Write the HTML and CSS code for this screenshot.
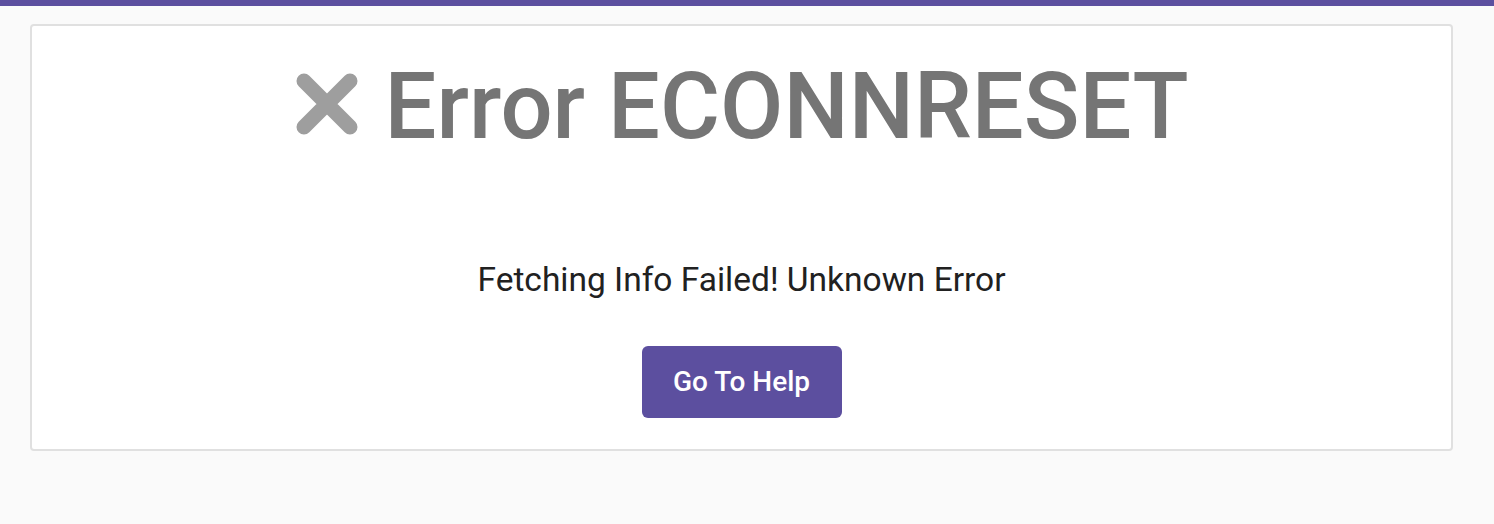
FILE: index.html
```html
<!DOCTYPE html>
<html>
<head>
<meta charset="utf-8">
<link rel="stylesheet" href="styles.css">
</head>
<body>
<div class="topbar"></div>
<main class="page">
  <section class="card">
    <h1 class="title">
      <svg class="x-icon" viewBox="0 0 64 64" width="64" height="64" aria-hidden="true">
        <path d="M9 9 L55 55 M55 9 L9 55" stroke="#9e9e9e" stroke-width="15" stroke-linecap="round" fill="none"/>
      </svg>
      <span>Error ECONNRESET</span>
    </h1>
    <p class="message">Fetching Info Failed! Unknown Error</p>
    <button class="help-btn">Go To Help</button>
  </section>
</main>
</body>
</html>
```

FILE: styles.css
```css
html, body {
  margin: 0;
  padding: 0;
  background: #fafafa;
  font-family: Roboto, "Noto Sans", sans-serif;
}
.topbar {
  height: 6px;
  background: #5c4f9f;
}
.page {
  padding: 18px 41px 0 30px;
}
.card {
  background: #fff;
  border: 2px solid #e0e0e0;
  border-radius: 4px;
  height: 427px;
  box-sizing: border-box;
  display: flex;
  flex-direction: column;
  align-items: center;
}
.title {
  margin: 26px 0 0;
  display: flex;
  align-items: center;
  gap: 26px;
  font-size: 92px;
  font-weight: 500;
  color: #757575;
  line-height: 1.2;
}
.x-icon {
  display: block;
  margin-top: -6px;
}
.message {
  margin: 98px 0 0;
  font-size: 33.5px;
  color: #212121;
  line-height: 1.2;
}
.help-btn {
  margin-top: 45px;
  width: 200px;
  height: 72px;
  border: none;
  border-radius: 6px;
  background: #5c4f9f;
  color: #fff;
  font-family: Roboto, sans-serif;
  font-size: 28px;
  font-weight: 500;
  cursor: pointer;
}
```
